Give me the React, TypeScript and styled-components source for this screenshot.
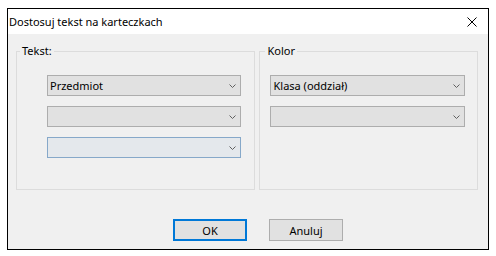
import styled, { createGlobalStyle } from "styled-components";

const GlobalStyle = createGlobalStyle`
  body {
    margin: 0;
    background: #ffffff;
    font-family: "Segoe UI", "Noto Sans", sans-serif;
    font-size: 11px;
    color: #000000;
  }
`;

export default function App() {
  return (
    <>
      <GlobalStyle />
      <Page>
        <Window>
          <TitleBar>
            <Title>Dostosuj tekst na karteczkach</Title>
            <svg width="10" height="10" viewBox="0 0 10 10" style={{ marginRight: 11 }}>
              <path d="M0.5 0.5 L9.5 9.5 M9.5 0.5 L0.5 9.5" stroke="#000" strokeWidth="1" />
            </svg>
          </TitleBar>
          <Body>
            <Groups>
              <Group width={240}>
                <Legend indent={3}>Tekst:</Legend>
                <Stack padLeft={30}>
                  <Combo>Przedmiot</Combo>
                  <Combo />
                  <Combo focused />
                </Stack>
              </Group>
              <Group width={219}>
                <Legend indent={5}>Kolor</Legend>
                <Stack padLeft={10}>
                  <Combo wide>Klasa (oddział)</Combo>
                  <Combo wide />
                </Stack>
              </Group>
            </Groups>
            <Buttons>
              <Button primary>OK</Button>
              <Button>Anuluj</Button>
            </Buttons>
          </Body>
        </Window>
      </Page>
    </>
  );
}

function Combo({ children, focused, wide }: { children?: React.ReactNode; focused?: boolean; wide?: boolean }) {
  return (
    <ComboBox focused={focused} wide={wide}>
      <span>{children}</span>
      <svg width="7" height="4" viewBox="0 0 7 4">
        <polyline points="0.5,0.5 3.5,3.5 6.5,0.5" fill="none" stroke="#606060" strokeWidth="1" />
      </svg>
    </ComboBox>
  );
}

const Page = styled.div`
  padding: 8px 0 0 7px;
`;

const Window = styled.div`
  width: 482px;
  height: 242px;
  box-sizing: border-box;
  border: 1px solid #000000;
  background: #f0f0f0;
  display: flex;
  flex-direction: column;
`;

const TitleBar = styled.div`
  height: 25px;
  background: #ffffff;
  display: flex;
  align-items: center;
  justify-content: space-between;
  padding-left: 1px;
`;

const Title = styled.span`
  font-size: 11px;
`;

const Body = styled.div`
  flex: 1;
  padding: 9px 10px 0 8px;
  display: flex;
  flex-direction: column;
`;

const Groups = styled.div`
  display: flex;
  gap: 4px;
`;

const Group = styled.fieldset<{ width: number }>`
  margin: 0;
  box-sizing: border-box;
  width: ${(p) => p.width}px;
  height: 147px;
  min-width: 0;
  padding: 0;
  border: 1px solid #dcdcdc;
`;

const Legend = styled.legend<{ indent: number }>`
  padding: 0 2px;
  margin-left: ${(p) => p.indent}px;
  line-height: 16px;
  font-size: 11px;
`;

const Stack = styled.div<{ padLeft: number }>`
  display: flex;
  flex-direction: column;
  gap: 10px;
  padding: 16px 0 0 ${(p) => p.padLeft}px;
`;

const ComboBox = styled.div<{ focused?: boolean; wide?: boolean }>`
  box-sizing: border-box;
  width: ${(p) => (p.wide ? 195 : 194)}px;
  height: 21px;
  padding: 0 4px 0 2px;
  border: 1px solid ${(p) => (p.focused ? "#86a8c9" : "#adadad")};
  background: ${(p) => (p.focused ? "#e4e8ec" : "#e1e1e1")};
  display: flex;
  align-items: center;
  justify-content: space-between;
  font-size: 11px;
`;

const Buttons = styled.div`
  display: flex;
  gap: 22px;
  margin-top: 29px;
  padding-left: 157px;
`;

const Button = styled.button<{ primary?: boolean }>`
  box-sizing: border-box;
  width: 74px;
  height: 22px;
  padding: 0;
  font-family: inherit;
  font-size: 11px;
  color: #000000;
  background: #e1e1e1;
  border: ${(p) => (p.primary ? "2px solid #0078d7" : "1px solid #adadad")};
`;
